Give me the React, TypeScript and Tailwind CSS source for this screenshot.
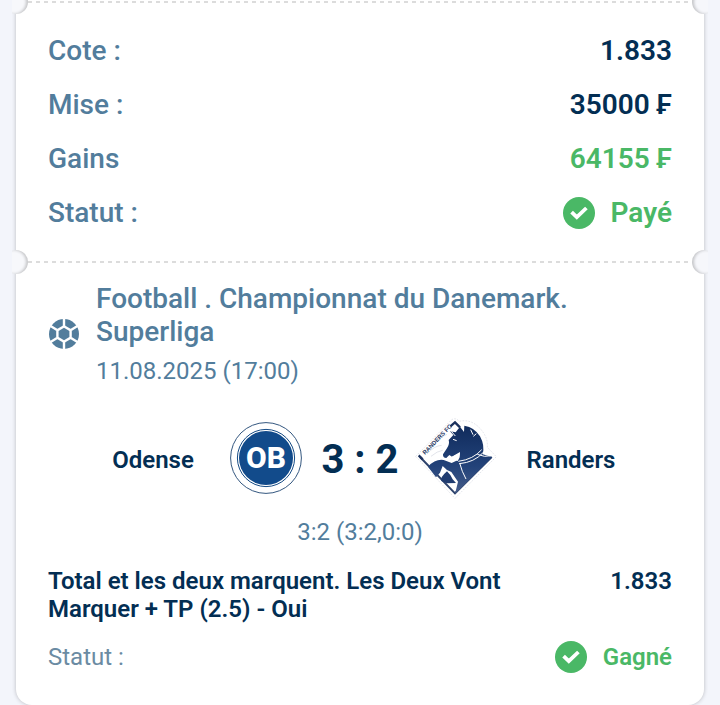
import type { ReactNode } from 'react';

function TicketDivider() {
  return (
    <div className="relative h-0.5">
      <div className="mx-3 h-0.5 bg-[repeating-linear-gradient(90deg,#dcdcdc_0_4px,transparent_4px_8px)]" />
      <div className="absolute -top-[11px] -left-1 h-6 w-4 overflow-hidden bg-[linear-gradient(90deg,#f3f5fb_4px,transparent_4px)]">
        <div className="absolute top-0 right-0 size-6 rounded-full bg-[#f7f8fb] shadow-[inset_-2px_0_3px_rgba(0,0,0,0.2)]" />
      </div>
      <div className="absolute -top-[11px] -right-1 h-6 w-4 overflow-hidden bg-[linear-gradient(270deg,#f3f5fb_4px,transparent_4px)]">
        <div className="absolute top-0 left-0 size-6 rounded-full bg-[#f6f7fb] shadow-[inset_2px_0_3px_rgba(0,0,0,0.2)]" />
      </div>
    </div>
  );
}

function CheckBadge() {
  return (
    <svg viewBox="0 0 32 32" className="size-8 shrink-0" aria-hidden="true">
      <circle cx="16" cy="16" r="16" fill="#4ab866" />
      <path d="M8.6 15.2 L13.8 20.2 L23.4 11" fill="none" stroke="#fff" strokeWidth="3.8" />
    </svg>
  );
}

function BallIcon() {
  return (
    <svg viewBox="0 0 32 32" className="size-8 shrink-0" aria-hidden="true">
      <circle cx="16" cy="16" r="15" fill="#527d9c" />
      <path d="M16 7 L23.8 11.4 V20.6 L16 25 L8.2 20.6 V11.4 Z" fill="#fff" />
      <path
        d="M16 0 V9 M16 23 V32 M23 12 L31 7 M23 20 L31 25 M9 12 L1 7 M9 20 L1 25"
        stroke="#fff"
        strokeWidth="2.4"
      />
      <path d="M16 9.8 L21.4 12.9 V19.1 L16 22.2 L10.6 19.1 V12.9 Z" fill="#527d9c" />
    </svg>
  );
}

function OdenseLogo() {
  return (
    <svg viewBox="0 0 72 72" className="size-[72px] shrink-0" role="img" aria-label="Odense">
      <circle cx="36" cy="36" r="35.4" fill="#fff" stroke="#34577f" strokeWidth="1" />
      <circle cx="36" cy="36" r="28.6" fill="#fff" stroke="#144a84" strokeWidth="1" />
      <circle cx="36" cy="36" r="27" fill="#124b8b" />
      <text
        x="36"
        y="46"
        textAnchor="middle"
        fontSize="30"
        fontWeight="800"
        fill="#fff"
        fontFamily="Roboto, sans-serif"
      >
        OB
      </text>
    </svg>
  );
}

function RandersLogo() {
  return (
    <svg
      viewBox="12 12 228 240"
      className="h-20 w-[76px] shrink-0 overflow-visible"
      role="img"
      aria-label="Randers"
    >
      <defs>
        <linearGradient id="horse" x1="0" y1="0" x2="0" y2="1">
          <stop offset="0" stopColor="#102b5c" />
          <stop offset="0.6" stopColor="#23437a" />
          <stop offset="1" stopColor="#465c89" />
        </linearGradient>
      </defs>
      <path
        d="M5 127 L112 18 Q124 9 136 22 Q170 14 197 42 Q223 70 220 100 L247 128 L123 253 Z"
        fill="#fff"
        stroke="#d3d7e0"
        strokeWidth="2"
        strokeDasharray="5 4"
      />
      <path d="M18 129 L123 238 L233 129" fill="none" stroke="#2e436c" strokeWidth="6" />
      <path
        d="M14 124 L26 136 M109 37 L123 25 L138 40"
        fill="none"
        stroke="#1b315d"
        strokeWidth="7"
      />
      <path
        d="M138 38 L150 54 L151 35 Q182 40 198 67 Q213 94 206 121 L235 129 L123 240 L132 203 L112 174 L99 168 L86 156 L78 176 L66 190 L42 158 Q64 134 89 138 L113 147 L132 138 L138 116 L114 128 L106 123 L97 132 Q86 132 87 121 L98 104 Q108 91 104 78 L118 63 L108 52 L125 55 Z"
        fill="url(#horse)"
      />
      <path
        d="M99 172 Q111 183 116 196 L126 207 L98 208 L82 201 Q78 190 99 172 Z"
        fill="#203c70"
      />
      <path d="M107 132 L138 114 L137 130 L131 141 L119 136 Z" fill="#fff" />
      <path
        d="M133 142 Q178 136 203 107 M136 149 Q181 145 207 116 M190 121 Q212 131 232 125 M137 147 L145 172 L156 195"
        fill="none"
        stroke="#fff"
        strokeWidth="3"
      />
      <path
        d="M170 47 L177 62 M187 59 L178 67 M117 76 L128 80 M112 52 L124 66"
        stroke="#fff"
        strokeWidth="3"
      />
      <path
        d="M39 120 Q61 95 83 94 M51 127 Q70 111 86 109 M78 72 L99 61"
        fill="none"
        stroke="#d3d7df"
        strokeWidth="2"
      />
      <text
        transform="translate(33 123) rotate(-46)"
        fontSize="18"
        fontWeight="700"
        fill="#24365f"
        fontFamily='"Liberation Sans", sans-serif'
      >
        RANDERS FC
      </text>
    </svg>
  );
}

function SummaryRow({ label, children }: { label: string; children: ReactNode }) {
  return (
    <div className="flex h-[54px] items-center justify-between text-[28px]">
      <dt className="font-medium text-[#527d9c]">{label}</dt>
      <dd className="flex items-center gap-4 font-semibold">{children}</dd>
    </div>
  );
}

export default function App() {
  return (
    <main className="bg-[#f3f5fb] px-4 font-[Roboto,'Liberation_Sans',sans-serif] text-[#032e53]">
      <article className="rounded-b-2xl bg-white pt-px shadow-[0_0_4px_rgba(0,0,0,0.24)]">
        <TicketDivider />
        <dl className="px-8 py-[21px]">
          <SummaryRow label="Cote :">1.833</SummaryRow>
          <SummaryRow label="Mise :">35000 ₣</SummaryRow>
          <SummaryRow label="Gains">
            <span className="text-[#4ab866]">64155 ₣</span>
          </SummaryRow>
          <SummaryRow label="Statut :">
            <CheckBadge />
            <span className="text-[#4ab866]">Payé</span>
          </SummaryRow>
        </dl>
        <TicketDivider />
        <section className="px-8 pt-[19px] pb-8">
          <header className="flex items-center gap-4 text-[#527d9c]">
            <BallIcon />
            <div>
              <h2 className="text-[28px] leading-[33px] font-medium">
                Football . Championnat du Danemark. Superliga
              </h2>
              <p className="mt-[9px] text-2xl leading-7">11.08.2025 (17:00)</p>
            </div>
          </header>
          <div className="mt-[33px] flex items-center pr-6 pl-7 text-2xl font-semibold">
            <div className="flex-1 pt-1 text-center">Odense</div>
            <OdenseLogo />
            <div className="w-[116px] pt-1 text-center text-[40px] font-bold">3 : 2</div>
            <RandersLogo />
            <div className="flex-1 pt-1 text-center">Randers</div>
          </div>
          <p className="mt-5 text-center text-2xl leading-7 text-[#527d9c]">3:2 (3:2,0:0)</p>
          <div className="mt-[21px] flex items-start justify-between gap-8 text-2xl leading-7 font-semibold">
            <p>Total et les deux marquent. Les Deux Vont Marquer + TP (2.5) - Oui</p>
            <p>1.833</p>
          </div>
          <div className="mt-[18px] flex items-center justify-between text-2xl">
            <span className="text-[#6b8ba3]">Statut :</span>
            <span className="flex items-center gap-4 font-semibold text-[#4ab866]">
              <CheckBadge />
              Gagné
            </span>
          </div>
        </section>
      </article>
    </main>
  );
}
